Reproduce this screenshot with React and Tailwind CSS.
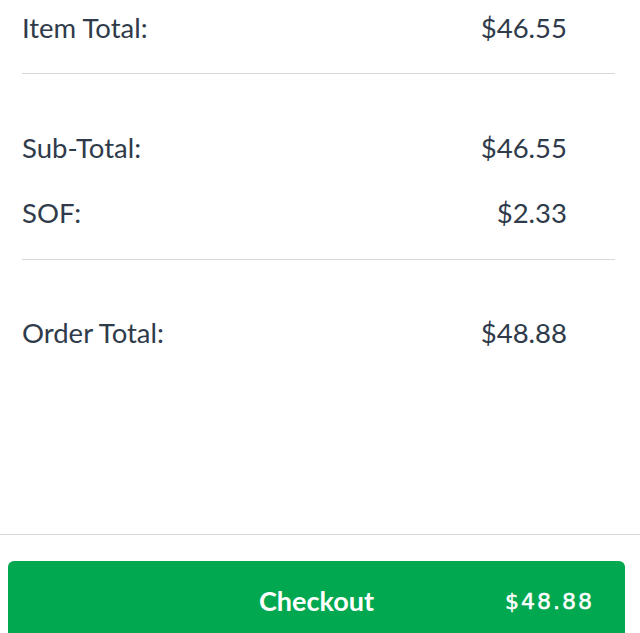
import React from 'react';

const rows = [
  { label: 'Sub-Total:', value: '$46.55' },
  { label: 'SOF:', value: '$2.33' },
];

function Row({ label, value, className = '' }) {
  return (
    <div className={`flex h-[56px] items-center justify-between text-[27.5px] text-[#2f3b4a] ${className}`}>
      <span>{label}</span>
      <span className="pr-[48px]">{value}</span>
    </div>
  );
}

export default function App() {
  return (
    <div className="h-[633px] w-[640px] overflow-hidden bg-white" style={{ fontFamily: 'Lato, "Liberation Sans", sans-serif' }}>
      <div className="pl-[22px] pr-[25px]">
        <Row label="Item Total:" value="$46.55" />
        <div className="mt-[17px] h-px bg-[#d5d8dc]" />
        <div className="mt-[46px] flex flex-col gap-[9px]">
          {rows.map((r) => (
            <Row key={r.label} label={r.label} value={r.value} />
          ))}
        </div>
        <div className="mt-[18px] h-px bg-[#d5d8dc]" />
        <Row label="Order Total:" value="$48.88" className="mt-[45px]" />
      </div>
      <div className="mt-[173px] h-px bg-[#d5d8dc]" />
      <div className="ml-2 mr-[15px] mt-[26px] grid h-[80px] grid-cols-[1fr_auto_1fr] items-center rounded-[6px] bg-[#01a84f] text-white">
        <span />
        <span className="text-[27px] font-bold">Checkout</span>
        <span
          className="pr-[31px] text-right text-[22px] tracking-[2px] [-webkit-text-stroke:0.5px_white]"
          style={{ fontFamily: '"DejaVu Sans", sans-serif' }}
        >
          $48.88
        </span>
      </div>
    </div>
  );
}
